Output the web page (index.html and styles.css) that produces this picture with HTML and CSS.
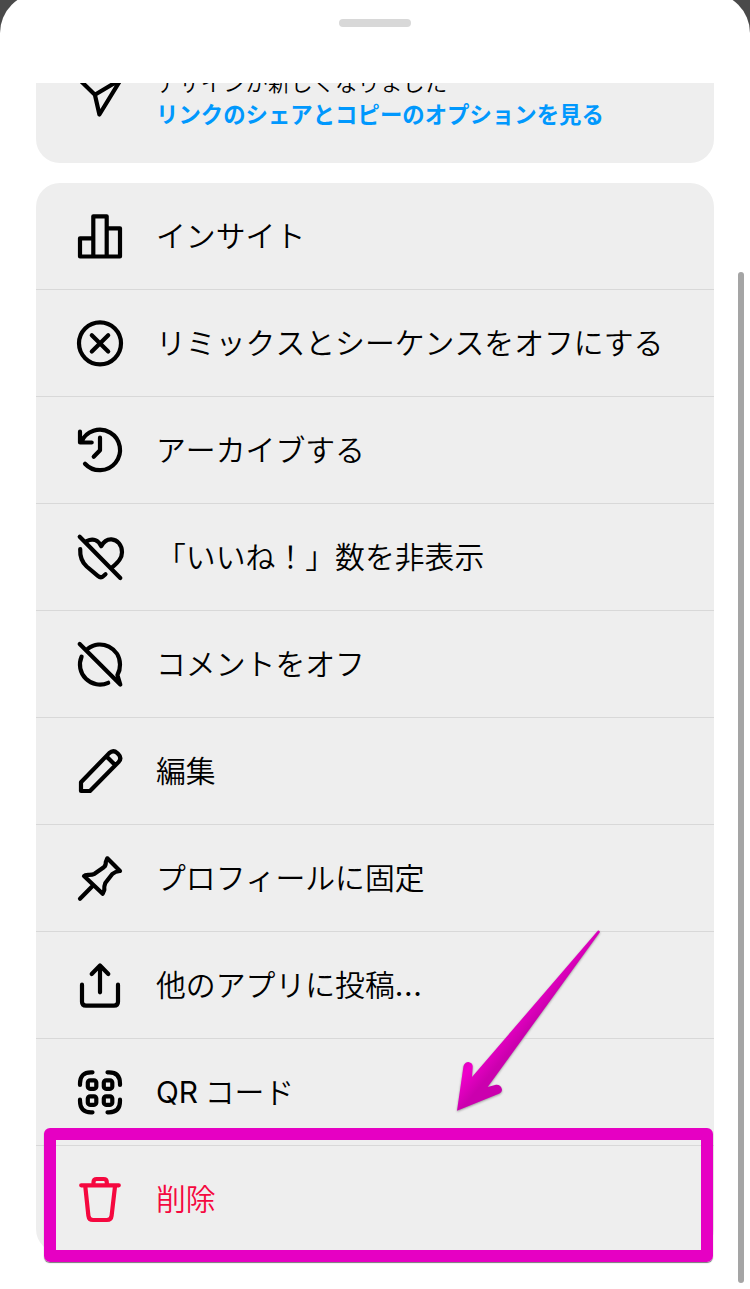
FILE: index.html
```html
<!DOCTYPE html>
<html lang="ja">
<head>
<meta charset="utf-8">
<title>投稿メニュー</title>
<link rel="stylesheet" href="styles.css">
</head>
<body>
<main class="sheet">
  <header class="sheet-header"><span class="grabber"></span></header>
  <div class="scroll-area">
    <section class="card notice">
      <svg class="icon" viewBox="0 0 48 48"><path d="M3 5.2H45L23.4 40.5 18.9 20.8ZM18.9 20.8 45 5.2"/></svg>
      <div class="notice-text">
        <p class="notice-title">デザインが新しくなりました</p>
        <a class="notice-link">リンクのシェアとコピーのオプションを見る</a>
      </div>
    </section>
    <ul class="card menu">
      <li class="row"><svg class="icon" viewBox="0 0 48 48"><path d="M4 43.5V25.3H17.3M17.3 43.5V3.3H30.7V43.5M30.7 15.3H44V43.5H4"/></svg><span class="label">インサイト</span></li>
      <li class="row"><svg class="icon" viewBox="0 0 48 48"><circle cx="24" cy="23.3" r="21"/><path d="M15.8 15.2 32.2 31.6M32.2 15.2 15.8 31.6"/></svg><span class="label">リミックスとシーケンスをオフにする</span></li>
      <li class="row"><svg class="icon" viewBox="0 0 48 48"><path d="M4 4.7V15.5H15.7M5.2 15.2A20.2 20.2 0 1 1 9 36.7M24 10.7V23.2L17.7 29.7"/></svg><span class="label">アーカイブする</span></li>
      <li class="row"><svg class="icon" viewBox="0 0 48 48"><path d="M3.7 2.7 44.3 44M10.7 7.2C17 3.7 22.5 6.2 25.2 12.2 28 7 32 5.2 35.5 5.4 41.5 5.8 46 11 46 18.2 46 24.7 41.5 28.4 36.3 33.3M4.2 15C3.8 23.5 5.7 28 10.7 32.5L21.8 41.8Q24.9 44.5 27.5 42L29.5 40.2"/></svg><span class="label">「いいね！」数を非表示</span></li>
      <li class="row"><svg class="icon" viewBox="0 0 48 48"><path d="M3.7 3 44.3 43.5 41.4 34A20 20 0 0 0 44 23.5 20 20 0 0 0 11.9 7.6M5.6 15.6A20 20 0 0 0 32.2 41.8"/></svg><span class="label">コメントをオフ</span></li>
      <li class="row"><svg class="icon" viewBox="0 0 48 48"><path d="M5 43V34.3L33.2 5.1Q37.3 1.4 41.2 5L42.2 6Q46.3 10 42.5 14.1L14 43ZM30.3 8.2 39.1 17"/></svg><span class="label">編集</span></li>
      <li class="row"><svg class="icon" viewBox="0 0 48 48"><path d="M4 43.7 17.3 30.3M31.3 3.3 44 16Q39 16.5 36.3 19L29.3 28Q28 31 28.3 35L26.7 38.7 8 21Q9 19.8 12 19.8 16 20 18.5 18.8L27.8 12.2Q30 10.5 29.8 7Z"/></svg><span class="label">プロフィールに固定</span></li>
      <li class="row"><svg class="icon" viewBox="0 0 48 48"><path d="M24 30.3V3.8M15.7 12 24 3.6 32.3 12M6 22.7V39.7Q6 43.6 10 43.6H38Q42 43.6 42 39.7V22.7"/></svg><span class="label">他のアプリに投稿<span class="latin dots">...</span></span></li>
      <li class="row"><svg class="icon" viewBox="0 0 48 48"><path d="M4 16V14.5Q4 3.3 15 3.3H16.5M31.5 3.3H33Q44 3.3 44 14.5V16M44 30.7V32Q44 43.3 33 43.3H31.5M16.5 43.3H15Q4 43.3 4 32V30.7"/><rect x="11.8" y="11.3" width="8.5" height="8.5" rx="2.3"/><rect x="27.8" y="11.3" width="8.5" height="8.5" rx="2.3"/><rect x="11.8" y="27.3" width="8.5" height="8.5" rx="2.3"/><rect x="27.8" y="27.3" width="8.5" height="8.5" rx="2.3"/></svg><span class="label"><span class="latin">QR</span> コード</span></li>
      <li class="row danger"><svg class="icon" viewBox="0 0 48 48"><path d="M5.2 9.3H42.8M17.5 8.8V6.2Q17.5 3 20.7 3H27.6Q30.8 3 30.8 6.2V8.8M9.3 10.5 12.4 39.7Q12.9 44 17 44H31Q35.1 44 35.6 39.7L39 10.5"/></svg><span class="label">削除</span></li>
    </ul>
  </div>
  <span class="scrollbar"></span>
  <span class="highlight"></span>
  <svg class="pointer" viewBox="0 0 150 184">
    <defs><linearGradient id="shade" x1="55" y1="78" x2="79" y2="98" gradientUnits="userSpaceOnUse"><stop offset="0" stop-color="#d900bb"/><stop offset=".35" stop-color="#f000cb"/><stop offset="1" stop-color="#cb00ae"/></linearGradient></defs>
    <path fill="url(#shade)" d="M7 180.7 13.5 136Q15 132 18.5 132 23 133 22.7 137L22 147 148 .5Q149.5 0 150 2L37.7 157 46 154.8Q51 154.5 52 159.5 52 162.5 48.3 164Z"/>
  </svg>
</main>
</body>
</html>
```
FILE: styles.css
```css
* { box-sizing: border-box; }
body {
  margin: 0;
  height: 1289px;
  overflow: hidden;
  background: #4a4a4a;
  color: #000;
  font-family: "Noto Sans CJK JP", sans-serif;
  font-kerning: none;
}
.sheet {
  position: relative;
  height: 1289px;
  overflow: hidden;
  background: #fff;
  clip-path: inset(-7px 0 0 0 round 40px 40px 0 0);
}
.sheet-header {
  display: flex;
  justify-content: center;
  height: 83px;
  padding-top: 19px;
}
.grabber {
  width: 72px;
  height: 8px;
  border-radius: 4px;
  background: #d8d8d8;
}
.scroll-area {
  display: flex;
  flex-direction: column;
  gap: 20px;
  padding: 0 36px;
  overflow: hidden;
}
.card {
  margin: 0;
  background: #eee;
  border-radius: 24px;
}
.icon {
  flex: none;
  width: 48px;
  height: 48px;
  fill: none;
  stroke: currentColor;
  stroke-width: 4.2;
  stroke-linecap: round;
  stroke-linejoin: round;
  overflow: visible;
}
.notice {
  display: flex;
  gap: 32px;
  height: 120px;
  margin-top: -40px;
  padding: 31px 40px 0;
}
.notice-text {
  font-size: 22.4px;
  line-height: 31px;
  white-space: nowrap;
}
.notice-title {
  margin: -8px 0 1px;
  font-weight: 350;
}
.notice-link {
  color: #0098fd;
  font-weight: 700;
}
.menu {
  padding: 0;
  list-style: none;
  overflow: hidden;
}
.row {
  display: flex;
  align-items: center;
  gap: 32px;
  height: 107px;
  padding: 1px 40px 0;
  border-bottom: 1px solid #d8d8d8;
}
.row:last-child { border-bottom: 0; }
.label {
  margin-top: -6px;
  font-family: "Noto Sans CJK JP DemiLight", "Noto Sans CJK JP", sans-serif;
  font-size: 29.85px;
  font-weight: 350;
  line-height: 44px;
  white-space: nowrap;
}
.latin {
  font-family: Inter, sans-serif;
  font-weight: 400;
  line-height: 1;
}
.dots { letter-spacing: .7px; }
.danger { color: #f5083f; }
.scrollbar {
  position: absolute;
  right: 6px;
  top: 272px;
  width: 6px;
  height: 1011px;
  border-radius: 3px;
  background: #a5a5a5;
}
.highlight {
  position: absolute;
  left: 44px;
  top: 1128px;
  width: 669px;
  height: 134px;
  border: 12px solid #e600c3;
  border-radius: 6px;
  box-shadow: 0 1px 1px #777;
}
.pointer {
  position: absolute;
  left: 450px;
  top: 930px;
  width: 150px;
  height: 184px;
  filter: drop-shadow(0 1px 1px #999);
}
```
